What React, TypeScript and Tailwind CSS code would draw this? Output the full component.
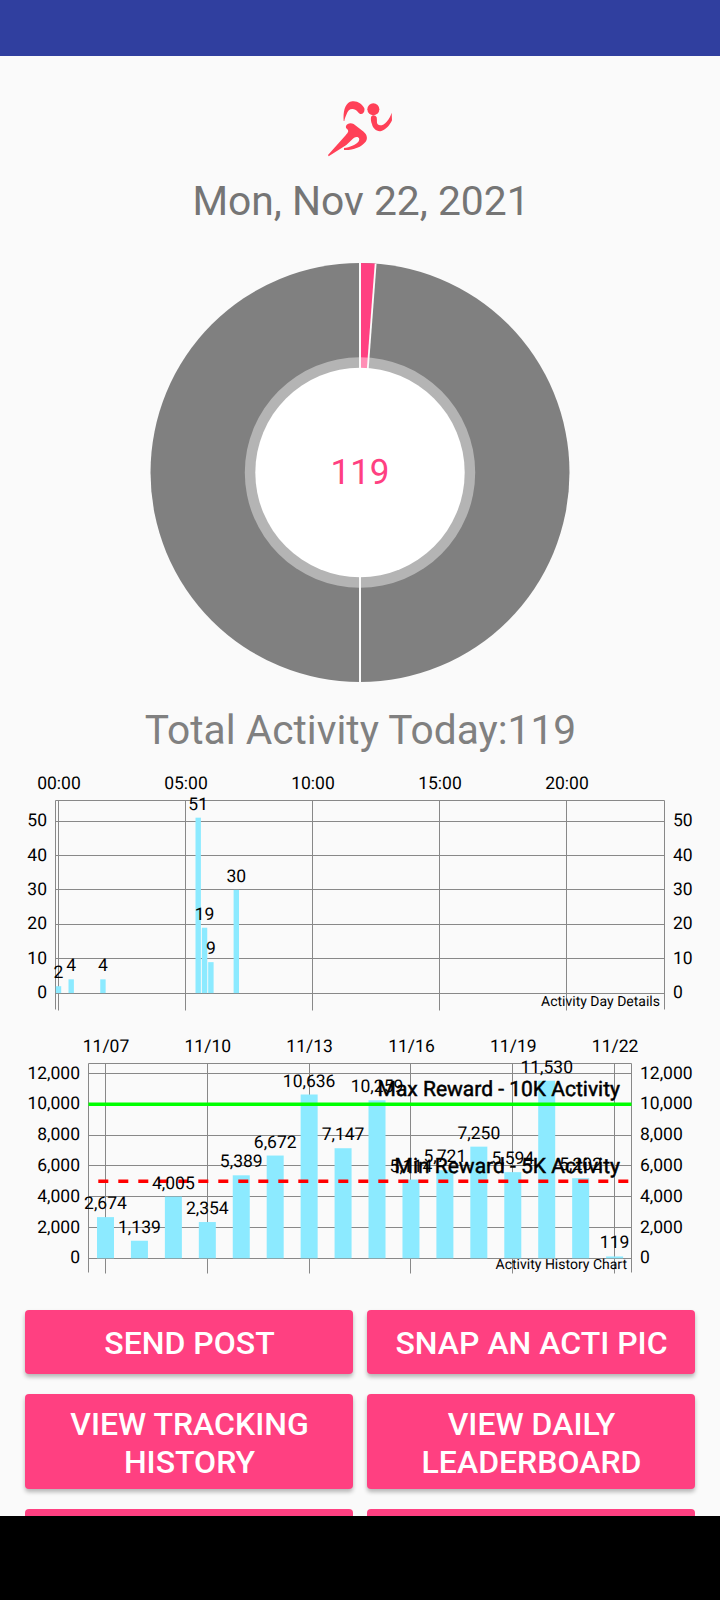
type Bar = { slot: number; value: number };

type Limit = { value: number; label: string; color: string; dashed?: boolean };

type ChartProps = {
  height: number;
  left: number;
  right: number;
  top: number;
  base: number;
  firstX: number;
  step: number;
  unit: number;
  barWidth: number;
  bars: Bar[];
  xTicks: { slot: number; label: string }[];
  yTicks: number[];
  limits?: Limit[];
  description: string;
};

const dayBars: Bar[] = [
  { slot: 0, value: 2 },
  { slot: 2, value: 4 },
  { slot: 7, value: 4 },
  { slot: 22, value: 51 },
  { slot: 23, value: 19 },
  { slot: 24, value: 9 },
  { slot: 28, value: 30 },
];

const historyBars: Bar[] = [
  2674, 1139, 4005, 2354, 5389, 6672, 10636, 7147, 10259, 5114, 5721, 7250,
  5594, 11530, 5202, 119,
].map((value, slot) => ({ slot, value }));

const dayTicks = ["00:00", "05:00", "10:00", "15:00", "20:00"].map(
  (label, i) => ({ slot: i * 20, label })
);

const historyTicks = ["11/07", "11/10", "11/13", "11/16", "11/19", "11/22"].map(
  (label, i) => ({ slot: i * 3, label })
);

const limits: Limit[] = [
  { value: 10000, label: "Max Reward - 10K Activity", color: "#00ff00" },
  { value: 5000, label: "Min Reward - 5K Activity", color: "#ff0000", dashed: true },
];

const buttons = [
  "Send Post",
  "Snap an Acti Pic",
  "View Tracking History",
  "View Daily Leaderboard",
];

// keeps one pixel wide lines sharp
const snap = (n: number) => Math.floor(n) + 0.5;

function BarChart(props: ChartProps) {
  const { left, right, top, base, firstX, step, unit, barWidth } = props;
  const x = (slot: number) => firstX + slot * step;
  const y = (value: number) => base - value * unit;

  return (
    <svg
      width={720}
      height={props.height}
      viewBox={`0 0 720 ${props.height}`}
      textRendering="geometricPrecision"
      className="block shrink-0 text-[17.5px]"
    >
      <g stroke="#888888" strokeWidth={1}>
        {props.xTicks.map((t) => (
          <line key={t.label} x1={snap(x(t.slot))} x2={snap(x(t.slot))} y1={top} y2={top + 210} />
        ))}
        {props.yTicks.map((t) => (
          <line key={t} x1={left} x2={right} y1={snap(y(t))} y2={snap(y(t))} />
        ))}
        <path
          d={`M${left} ${top + 209}V${top}H${right}V${top + 209}`}
          fill="none"
        />
      </g>
      {props.bars.map((b) => (
        <rect
          key={b.slot}
          x={x(b.slot) - barWidth / 2}
          y={y(b.value)}
          width={barWidth}
          height={b.value * unit}
          fill="#8ceaff"
        />
      ))}
      {props.limits?.map((l) => (
        <line
          key={l.label}
          x1={l.dashed ? left + 9.8 : left}
          x2={right}
          y1={y(l.value)}
          y2={y(l.value)}
          stroke={l.color}
          strokeWidth={3.5}
          strokeDasharray={l.dashed ? "10 10" : undefined}
        />
      ))}
      <g textAnchor="middle">
        {props.xTicks.map((t) => (
          <text key={t.label} x={x(t.slot) + 0.5} y={top - 11.5}>
            {t.label}
          </text>
        ))}
        {props.bars.map((b) => (
          <text key={b.slot} x={x(b.slot)} y={y(b.value) - 8}>
            {b.value.toLocaleString("en-US")}
          </text>
        ))}
      </g>
      {props.yTicks.map((t) => (
        <g key={t}>
          <text x={left - 8.5} y={y(t) + 5} textAnchor="end">
            {t.toLocaleString("en-US")}
          </text>
          <text x={right + 8.5} y={y(t) + 5}>
            {t.toLocaleString("en-US")}
          </text>
        </g>
      ))}
      {props.limits?.map((l) => (
        <text
          key={l.label}
          x={right - 11.5}
          y={y(l.value) - 8.5}
          textAnchor="end"
          className="text-[21px]"
          stroke="#000"
          strokeWidth={0.5}
        >
          {l.label}
        </text>
      ))}
      <text x={right - 4.5} y={top + 205} textAnchor="end" className="text-[14px]">
        {props.description}
      </text>
    </svg>
  );
}

function Runner() {
  return (
    <svg
      width={64}
      height={64}
      viewBox="84 56 192 192"
      fill="#ff4057"
      className="block shrink-0 blur-[0.7px]"
    >
      <path d="M131 122C129 95 134 66 157 63C172 61 186 70 193 84C195 93 190 101 183 101C176 101 174 93 167 89C155 82 144 88 140 101C137 109 134 114 133 122Z" />
      <circle cx={220} cy={87} r={18} />
      <path d="M213 110C217 102 226 104 230 111C232 121 229 127 233 132C240 139 252 133 260 124C268 115 272 106 275 97L276 120C270 133 259 148 244 152C230 155 219 145 216 132C213 125 212 118 213 110Z" />
      <path d="M138 137C142 128 152 127 161 131L191 154C201 163 204 174 197 184C184 200 160 210 132 209L132 203C150 200 166 194 175 184C180 178 178 170 170 170C160 170 150 185 139 194L86 228L84 224L137 165C146 155 146 152 142 147C138 144 137 141 138 137Z" />
    </svg>
  );
}

function ActivityPie({ count }: { count: number }) {
  const angle = (count / 10000) * 2 * Math.PI;
  const endX = 210 + 209.5 * Math.sin(angle);
  const endY = 210 - 209.5 * Math.cos(angle);

  return (
    <svg
      width={420}
      height={421}
      viewBox="0 -0.5 420 421"
      textRendering="geometricPrecision"
      className="block"
    >
      <circle cx={210} cy={210} r={209.5} fill="#808080" />
      <path d={`M210 210V0.5A209.5 209.5 0 0 1 ${endX} ${endY}Z`} fill="#ff4081" />
      <circle cx={210} cy={210} r={115.2} fill="#fff" fillOpacity={0.41} />
      <path d="M210 0V420" stroke="#fafafa" strokeWidth={2} />
      <path d={`M210 210L${endX} ${endY}`} stroke="#fafafa" strokeWidth={1.8} />
      <circle cx={210} cy={210} r={104.7} fill="#fff" />
      <text x={210} y={221.5} textAnchor="middle" fill="#ff4081" className="text-[35px]">
        {count}
      </text>
    </svg>
  );
}

export default function App() {
  return (
    <div className="flex h-[1600px] w-[720px] flex-col overflow-hidden bg-[#fafafa] font-['Roboto',sans-serif]">
      <header className="h-14 shrink-0 bg-[#303f9f]" />
      <main className="flex h-[1460px] shrink-0 flex-col items-center overflow-hidden pt-[43px]">
        <Runner />
        <h1 className="mt-3.5 shrink-0 pl-0.5 text-[40.8px] leading-[49px] text-[#757575]">
          Mon, Nov 22, 2021
        </h1>
        <div className="shrink-0 pt-9 pb-[23px]">
          <ActivityPie count={119} />
        </div>
        <h2 className="shrink-0 pl-px text-[40.7px] leading-[49px] text-[#808080]">
          Total Activity Today:119
        </h2>
        <BarChart
          height={269}
          left={55.5}
          right={664.5}
          top={45.5}
          base={238.1}
          firstX={58.5}
          step={6.35}
          unit={3.44}
          barWidth={5.4}
          bars={dayBars}
          xTicks={dayTicks}
          yTicks={[0, 10, 20, 30, 40, 50]}
          description="Activity Day Details"
        />
        <BarChart
          height={266}
          left={88.5}
          right={631.5}
          top={39.5}
          base={234.3}
          firstX={105.5}
          step={33.94}
          unit={0.0154}
          barWidth={17}
          bars={historyBars}
          xTicks={historyTicks}
          yTicks={[0, 2000, 4000, 6000, 8000, 10000, 12000]}
          limits={limits}
          description="Activity History Chart"
        />
        <div className="grid w-full shrink-0 grid-cols-2 grid-rows-[64px_95px_95px] gap-x-3.5 gap-y-5 px-[25px] pt-5">
          {buttons.map((label) => (
            <button
              key={label}
              className="rounded-[4px] bg-[#ff4081] pt-0.5 pr-6 pl-[25px] text-[32px] leading-[38px] font-medium text-white uppercase shadow-[0_3px_4px_rgba(0,0,0,0.28)]"
            >
              {label}
            </button>
          ))}
          <div className="rounded-[4px] bg-[#ff4081]" />
          <div className="rounded-[4px] bg-[#ff4081]" />
        </div>
      </main>
      <footer className="grow bg-black" />
    </div>
  );
}
